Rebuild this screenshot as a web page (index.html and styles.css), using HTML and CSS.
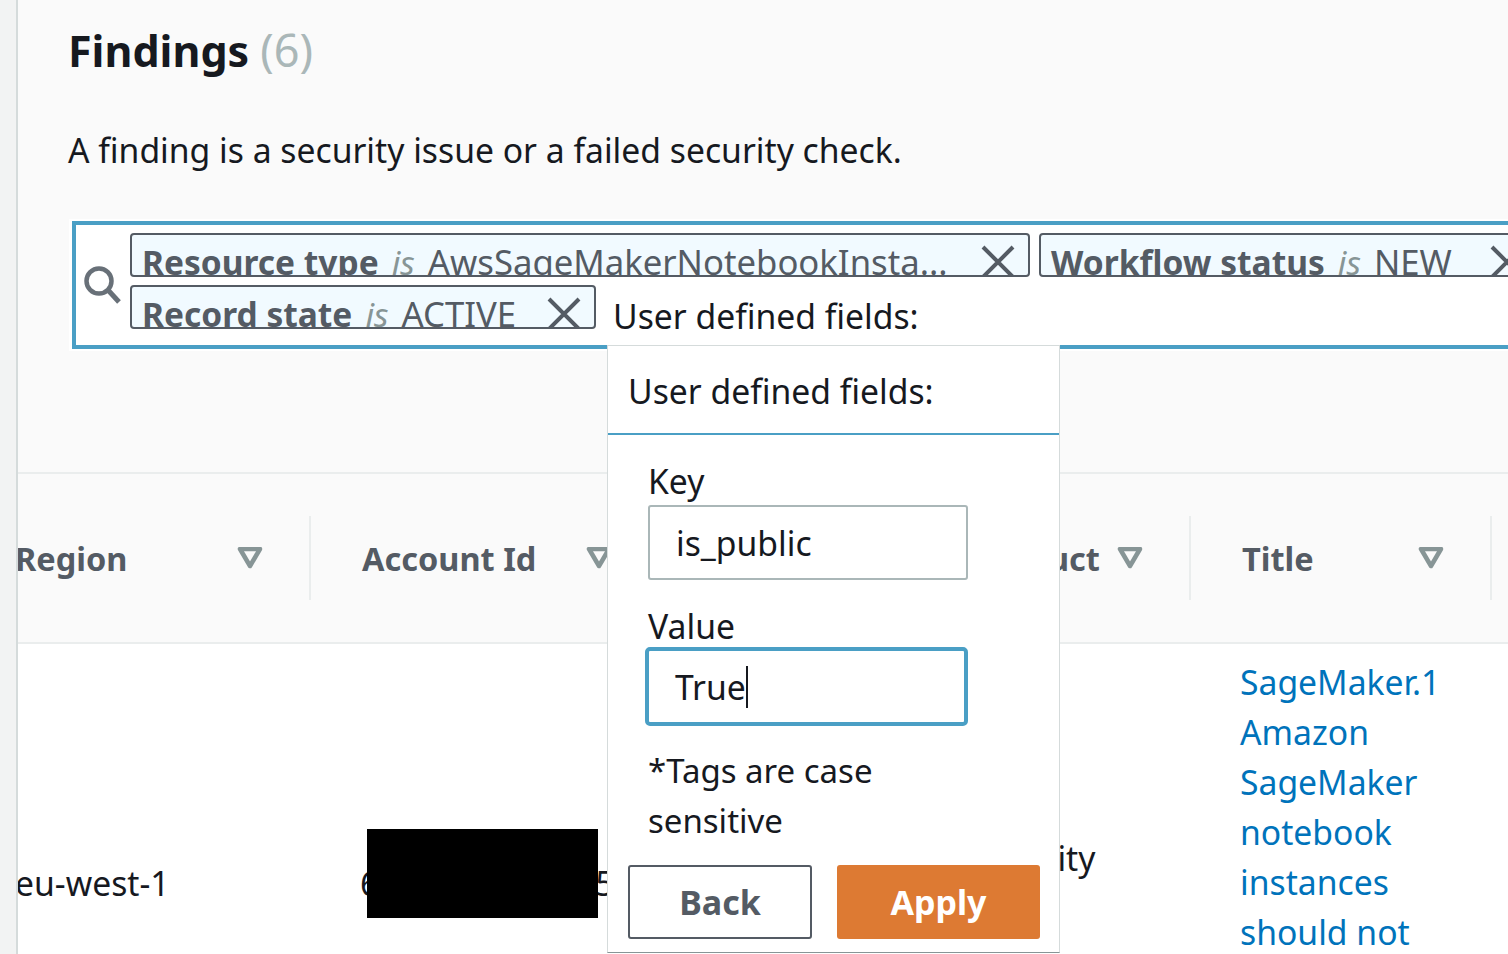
FILE: index.html
```html
<!DOCTYPE html>
<html lang="en">
<head>
  <meta charset="UTF-8" />
  <title>Findings | Security Hub</title>
  <link rel="stylesheet" href="styles.css">
</head>
<body>

  <div class="rail"></div>

  <main class="main">
    <section class="intro">
      <h1>Findings <span class="count">(6)</span></h1>
      <p>A finding is a security issue or a failed security check.</p>

      <div class="search-halo">
        <div class="search">
          <svg class="search-icon" viewBox="0 0 38 38" width="38" height="38">
            <circle cx="15" cy="15" r="12.5" fill="none" stroke="#687078" stroke-width="4.5"/>
            <path d="M24 24l11 12" fill="none" stroke="#687078" stroke-width="5"/>
          </svg>
          <div class="tokens">
            <div class="chip chip-wide">
              <span class="chip-text"><b>Resource type</b> <i>is</i> AwsSageMakerNotebookInsta...</span>
              <svg class="chip-x" viewBox="0 0 36 36"><path d="M3 3l30 30M33 3L3 33"/></svg>
            </div>
            <div class="chip chip-status">
              <span class="chip-text"><b>Workflow status</b> <i>is</i> NEW</span>
              <svg class="chip-x" viewBox="0 0 36 36"><path d="M3 3l30 30M33 3L3 33"/></svg>
            </div>
            <div class="chip chip-state">
              <span class="chip-text"><b>Record state</b> <i>is</i> ACTIVE</span>
              <svg class="chip-x" viewBox="0 0 36 36"><path d="M3 3l30 30M33 3L3 33"/></svg>
            </div>
            <span class="search-input">User defined fields:</span>
          </div>
        </div>
      </div>
    </section>

    <div class="table">
      <div class="th th-region"><span>Region</span><svg class="funnel" viewBox="0 0 26 22"><path d="M3 2h20L13 19z"/></svg></div>
      <div class="th"><span>Account Id</span><svg class="funnel" viewBox="0 0 26 22"><path d="M3 2h20L13 19z"/></svg></div>
      <div class="th th-blank"></div>
      <div class="th th-product"><span>Product</span><svg class="funnel" viewBox="0 0 26 22"><path d="M3 2h20L13 19z"/></svg></div>
      <div class="th"><span>Title</span><svg class="funnel" viewBox="0 0 26 22"><path d="M3 2h20L13 19z"/></svg></div>
      <div class="th th-rest"></div>

      <div class="td td-region">eu-west-1</div>
      <div class="td td-account">6<span class="redact"></span>5</div>
      <div class="td"></div>
      <div class="td td-product">Security</div>
      <div class="td td-title">
        <a href="#">SageMaker.1 Amazon SageMaker notebook instances should not have direct internet access</a>
      </div>
      <div class="td"></div>
    </div>

    <div class="popover">
      <div class="popover-head">User defined fields:</div>
      <div class="popover-body">
        <label class="field-label">Key</label>
        <div class="field field-key">is_public</div>
        <label class="field-label field-label-second">Value</label>
        <div class="field field-focus">True<span class="caret"></span></div>
        <p class="hint">*Tags are case sensitive</p>
      </div>
      <div class="popover-actions">
        <button class="btn btn-back">Back</button>
        <button class="btn btn-apply">Apply</button>
      </div>
    </div>
  </main>

</body>
</html>
```

FILE: styles.css
```css
* {
  box-sizing: border-box;
}

html, body {
  height: 954px;
  overflow: hidden;
}

body {
  margin: 0;
  display: flex;
  font-family: 'Noto Sans', sans-serif;
  color: #16191f;
  background-color: #f2f3f3;
}

.rail {
  width: 18px;
  flex: none;
  background-color: #f2f3f3;
  border-right: 2px solid #d5dbdb;
}

.main {
  position: relative;
  flex: 1;
  min-width: 0;
  overflow: hidden;
  background-color: #fafafa;
}

.intro {
  height: 472px;
  padding: 21px 0 0 50px;
}

h1 {
  margin: 0;
  font-size: 43px;
  line-height: 58px;
  font-weight: 700;
}

.count {
  font-size: 45px;
  font-weight: 400;
  color: #aab7b8;
}

.intro p {
  margin: 45px 0 0;
  font-size: 33.7px;
  line-height: 50px;
}

.search-halo {
  width: 1500px;
  margin: 44px 0 0 1px;
  padding: 2px 0 2px 3px;
  background: #fff;
}

.search {
  display: flex;
  height: 128px;
  padding: 8px 0 0 8px;
  background: #fff;
  border: 4px solid #4a9fc5;
}

.search-icon {
  flex: none;
  margin: 33px 8px 0 0;
}

.tokens {
  display: flex;
  flex-wrap: wrap;
  align-content: flex-start;
  gap: 8px 9px;
}

.chip {
  display: flex;
  justify-content: space-between;
  height: 44px;
  overflow: hidden;
  padding: 2px 12px 0 10px;
  font-size: 34.7px;
  line-height: 50px;
  color: #545b64;
  background: #f1faff;
  border: 2px solid #545b64;
  border-radius: 4px;
  white-space: nowrap;
}

.chip b {
  font-size: 33.5px;
}

.chip i {
  margin: 0 4px;
  font-size: 33.5px;
  color: #879596;
}

.chip-wide {
  width: 900px;
}

.chip-status {
  width: 500px;
}

.chip-state {
  width: 466px;
}

.chip-x {
  flex: none;
  width: 36px;
  height: 36px;
  margin-top: 7px;
  fill: none;
  stroke: #545b64;
  stroke-width: 4;
}

.search-input {
  margin-left: 8px;
  font-size: 33.7px;
  line-height: 50px;
  height: 50px;
  margin-top: 6px;
}

.table {
  display: grid;
  grid-template-columns: 293px 349px 270px 261px 301px 1fr;
  grid-template-rows: 172px 478px;
}

.th {
  display: flex;
  align-items: center;
  justify-content: space-between;
  padding: 0 48px 0 51px;
  font-size: 32.5px;
  font-weight: 700;
  color: #545b64;
  background: #fafafa;
  border-top: 2px solid #eaeded;
  border-bottom: 2px solid #eaeded;
  position: relative;
}

.th::after {
  content: "";
  position: absolute;
  right: 0;
  top: 42px;
  width: 2px;
  height: 84px;
  background: #eaeded;
}

.th-blank::after,
.th-rest::after {
  display: none;
}

.th-region {
  padding-left: 0;
}

.th-region span {
  margin-left: -3px;
}

.th-product {
  padding-left: 43px;
}

.funnel {
  flex: none;
  width: 26px;
  height: 22px;
  fill: none;
  stroke: #879596;
  stroke-width: 4.5;
  stroke-linejoin: round;
}

.td {
  display: flex;
  align-items: center;
  font-size: 33.7px;
  line-height: 50px;
  background: #fff;
}

.td-region {
  margin-left: -3px;
}

.td-account {
  position: relative;
  padding-left: 49px;
  gap: 216px;
}

.redact {
  position: absolute;
  left: 56px;
  top: 185px;
  width: 231px;
  height: 89px;
  background: #000;
}

.td-product {
  padding: 0 0 50px 39px;
}

.td-title {
  padding: 13px 40px 0 49px;
  align-items: flex-start;
}

.td-title a {
  color: #0073bb;
  text-decoration: none;
}

.popover {
  position: absolute;
  left: 589px;
  top: 345px;
  width: 453px;
  height: 608px;
  background: #fff;
  border: 1px solid #d5dbdb;
  border-bottom-color: #879596;
}

.popover-head {
  height: 89px;
  padding: 20px 0 0 20px;
  font-size: 33.7px;
  line-height: 50px;
  border-bottom: 2px solid #4a9fc5;
}

.popover-body {
  padding: 21px 40px 0;
}

.field-label {
  display: block;
  font-size: 33.7px;
  line-height: 50px;
}

.field-label-second {
  margin-top: 21px;
}

.field {
  display: flex;
  align-items: center;
  width: 320px;
  height: 75px;
  padding-left: 26px;
  font-size: 33.7px;
  border: 2px solid #aab7b8;
  border-radius: 3px;
}

.field-key {
  margin-top: -1px;
}

.field-focus {
  width: 323px;
  height: 79px;
  margin: -4px 0 0 -3px;
  padding-left: 26px;
  border: 4px solid #4a9fc5;
  border-radius: 5px;
}

.caret {
  width: 2px;
  height: 42px;
  background: #16191f;
}

.hint {
  margin: 20px 0 0;
  width: 320px;
  font-size: 33px;
  line-height: 50px;
}

.popover-actions {
  display: flex;
  gap: 25px;
  padding: 19px 0 0 20px;
}

.btn {
  height: 74px;
  font-family: inherit;
  font-size: 34px;
  font-weight: 700;
  border-radius: 3px;
}

.btn-back {
  width: 184px;
  color: #545b64;
  background: #fff;
  border: 2px solid #545b64;
}

.btn-apply {
  width: 203px;
  color: #fff;
  background: #dd7a33;
  border: none;
}
```
